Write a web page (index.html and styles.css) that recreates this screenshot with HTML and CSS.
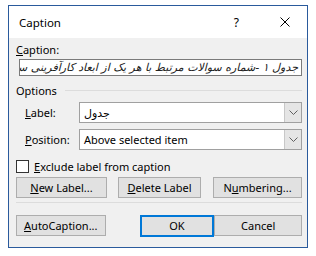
FILE: index.html
```html
<!DOCTYPE html>
<html lang="en">
<head>
  <meta charset="UTF-8">
  <title>Caption</title>
  <link rel="stylesheet" href="styles.css">
</head>
<body>
  <div class="dialog">
    <div class="titlebar">
      <span class="title">Caption</span>
      <span class="help">?</span>
      <svg class="close" width="10" height="10" viewBox="0 0 10 10">
        <path d="M0.5 0.5 L9.5 9.5 M9.5 0.5 L0.5 9.5" stroke="#000" stroke-width="1" fill="none"/>
      </svg>
    </div>

    <div class="content">
      <div class="field-label"><u>C</u>aption:</div>
      <div class="textbox" dir="rtl">جدول ۱ -شماره سوالات مرتبط با هر یک از ابعاد کارآفرینی سازمانی</div>

      <div class="group-title"><span>Options</span><div class="line"></div></div>

      <div class="row first">
        <span class="row-label"><u>L</u>abel:</span>
        <div class="select">
          <span class="value">جدول</span>
          <span class="arrow">
            <svg width="9" height="5" viewBox="0 0 9 5"><path d="M0.5 0.5 L4.5 4.5 L8.5 0.5" stroke="#606060" fill="none"/></svg>
          </span>
        </div>
      </div>
      <div class="row">
        <span class="row-label"><u>P</u>osition:</span>
        <div class="select">
          <span class="value">Above selected item</span>
          <span class="arrow">
            <svg width="9" height="5" viewBox="0 0 9 5"><path d="M0.5 0.5 L4.5 4.5 L8.5 0.5" stroke="#606060" fill="none"/></svg>
          </span>
        </div>
      </div>

      <div class="check">
        <span class="box"></span>
        <span><u>E</u>xclude label from caption</span>
      </div>

      <div class="buttons">
        <div class="btn b1"><u>N</u>ew Label...</div>
        <div class="btn b2"><u>D</u>elete Label</div>
        <div class="btn b3">N<u>u</u>mbering...</div>
      </div>

      <div class="sep"></div>

      <div class="buttons bottom">
        <div class="btn b1"><u>A</u>utoCaption...</div>
        <div class="btn ok">OK</div>
        <div class="btn b3">Cancel</div>
      </div>
    </div>
  </div>
</body>
</html>
```

FILE: styles.css
```css
body { margin: 0; background: #fff; font-family: "Noto Sans", "DejaVu Sans", sans-serif; font-size: 11px; color: #000; }
u { text-decoration: underline; text-underline-offset: 1px; }
.dialog { margin: 5px 0 0 8px; width: 298px; height: 241px; border: 1px solid #2a5a9c; background: #f0f0f0; display: flex; flex-direction: column; }
.titlebar { height: 32px; background: #fff; display: flex; align-items: center; }
.title { margin-left: 10px; font-size: 11.5px; flex: 1; }
.help { font-size: 12px; margin-right: 41px; }
.close { margin-right: 17px; }
.content { padding: 4px 5px 0 7px; display: flex; flex-direction: column; }
.field-label { height: 16px; line-height: 16px; }
.textbox { margin: 1px 0 0 3px; height: 15px; line-height: 15px; border: 1px solid #7a7a7a; background: #fff; padding: 0 3px; overflow: hidden; white-space: nowrap; font-family: "DejaVu Sans", sans-serif; font-size: 11px; font-style: italic; color: #222; }
.group-title { display: flex; align-items: center; margin-top: 6px; height: 16px; }
.group-title .line { flex: 1; height: 1px; background: #dcdcdc; margin-left: 8px; }
.row { display: flex; align-items: center; margin-top: 6px; }
.row.first { margin-top: 4px; }
.row-label { width: 54px; padding-left: 9px; }
.select { flex: 1; height: 19px; border: 1px solid #a0a0a0; background: #fff; display: flex; align-items: center; }
.select .value { flex: 1; padding-left: 4px; }
.arrow { width: 16px; height: 19px; background: #e5e5e5; border-left: 1px solid #c8c8c8; display: flex; align-items: center; justify-content: center; }
.check { display: flex; align-items: center; margin-top: 10px; height: 13px; }
.box { width: 11px; height: 11px; border: 1px solid #333; background: #fff; margin-right: 5px; }
.buttons { display: flex; margin-top: 4px; }
.btn { height: 19px; line-height: 19px; border: 1px solid #adadad; background: #e1e1e1; text-align: center; }
.b1 { width: 89px; }
.b2 { width: 81px; margin-left: 11px; }
.b3 { width: 87px; margin-left: auto; }
.ok { width: 72px; margin-left: 34px; border: 2px solid #0078d7; height: 18px; line-height: 18px; }
.buttons.bottom { margin-top: 12px; }
.sep { height: 1px; background: #dcdcdc; margin-top: 4px; }
```
